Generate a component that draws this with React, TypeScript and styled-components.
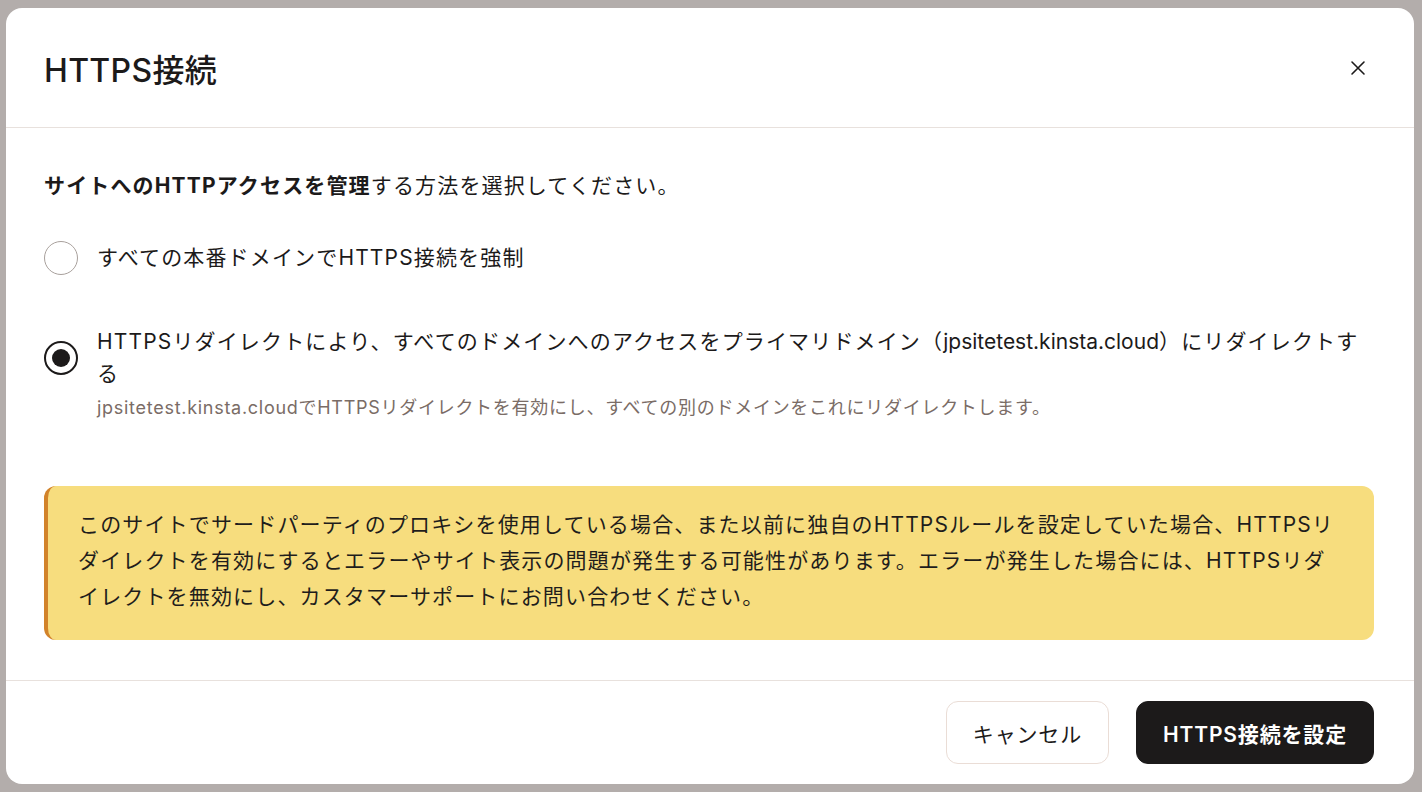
import React, { FC, useState } from 'react'
import styled, { createGlobalStyle } from 'styled-components'

const GlobalStyle = createGlobalStyle`
  html, body {
    margin: 0;
    padding: 0;
    height: 100%;
  }
  body {
    background: #b3adab;
    font-family: Inter, "Noto Sans CJK JP", sans-serif;
    color: #1c1a1a;
  }
  #root {
    height: 100%;
  }
`

const Backdrop = styled.div`
  height: 100vh;
  box-sizing: border-box;
  padding: 8px 8px 8px 6px;
  display: flex;
`

const Modal = styled.div`
  flex: 1;
  background: #fff;
  border-radius: 16px;
  display: flex;
  flex-direction: column;
  overflow: hidden;
`

const Header = styled.header`
  height: 121px;
  box-sizing: border-box;
  padding: 0 40px 0 38px;
  display: flex;
  align-items: center;
  justify-content: space-between;
  border-bottom: 1px solid #e8e1dd;
`

const Title = styled.h1`
  margin: 0;
  font-size: 32px;
  font-weight: 500;
  letter-spacing: 0.01em;
`

const CloseButton = styled.button`
  width: 32px;
  height: 32px;
  border: 0;
  background: none;
  padding: 0;
  display: flex;
  align-items: center;
  justify-content: center;
  color: #1c1a1a;
  cursor: pointer;
`

const Body = styled.div`
  flex: 1;
  padding: 40px 40px 40px 38px;
  display: flex;
  flex-direction: column;
`

const Lead = styled.p`
  margin: 0;
  font-size: 21px;
  line-height: 36px;
  letter-spacing: 0.055em;

  strong {
    font-weight: 700;
  }
`

const Options = styled.div`
  margin-top: 37px;
  display: flex;
  flex-direction: column;
  gap: 51px;
`

const Option = styled.label`
  display: flex;
  flex-direction: column;
  cursor: pointer;
`

const OptionRow = styled.div`
  display: flex;
  align-items: center;
  gap: 19px;
`

const Radio = styled.span<{ $checked: boolean }>`
  flex: none;
  width: 34px;
  height: 34px;
  box-sizing: border-box;
  border-radius: 50%;
  border: ${(p) => (p.$checked ? '2px solid #1c1a1a' : '1.5px solid #a8a09c')};
  display: flex;
  align-items: center;
  justify-content: center;

  &::after {
    content: '';
    display: ${(p) => (p.$checked ? 'block' : 'none')};
    width: 18px;
    height: 18px;
    border-radius: 50%;
    background: #1c1a1a;
  }
`

const OptionLabel = styled.span`
  font-size: 21px;
  line-height: 32px;
  letter-spacing: 0.055em;
`

const Domain = styled.span`
  letter-spacing: 0;
`

const OptionHint = styled.span`
  margin: 6px 0 0 53px;
  font-size: 18px;
  line-height: 24px;
  letter-spacing: 0.04em;
  color: #7a6c66;
`

const Warning = styled.div`
  margin-top: 66px;
  background: #f7dd7e;
  border-left: 4px solid #d2832a;
  border-radius: 12px;
  padding: 21px 28px 25px 30px;
  font-size: 21px;
  line-height: 36px;
  letter-spacing: 0.055em;
  color: #1f1d1c;
`

const Footer = styled.footer`
  border-top: 1px solid #e8e1dd;
  padding: 20px 40px 20px 38px;
  display: flex;
  justify-content: flex-end;
  gap: 27px;
`

const Button = styled.button<{ $primary?: boolean }>`
  height: 63px;
  padding: 0 26px;
  border-radius: 12px;
  font-family: inherit;
  font-size: 21px;
  letter-spacing: 0.04em;
  cursor: pointer;
  border: 1px solid ${(p) => (p.$primary ? '#1c1a1a' : '#eaddd6')};
  background: ${(p) => (p.$primary ? '#1c1a1a' : '#fff')};
  color: ${(p) => (p.$primary ? '#fff' : '#1c1a1a')};
  font-weight: ${(p) => (p.$primary ? 600 : 400)};
`

const CloseIcon = () => (
  <svg width="16" height="16" viewBox="0 0 16 16" fill="none">
    <path d="M2 2L14 14M14 2L2 14" stroke="currentColor" strokeWidth="1.6" strokeLinecap="round" />
  </svg>
)

type Mode = 'force' | 'redirect'

const App: FC = () => {
  const [mode, setMode] = useState<Mode>('redirect')

  return (
    <>
      <GlobalStyle />
      <Backdrop>
        <Modal role="dialog">
          <Header>
            <Title>HTTPS接続</Title>
            <CloseButton aria-label="閉じる">
              <CloseIcon />
            </CloseButton>
          </Header>
          <Body>
            <Lead>
              <strong>サイトへのHTTPアクセスを管理</strong>する方法を選択してください。
            </Lead>
            <Options>
              <Option onClick={() => setMode('force')}>
                <OptionRow>
                  <Radio $checked={mode === 'force'} />
                  <OptionLabel>すべての本番ドメインでHTTPS接続を強制</OptionLabel>
                </OptionRow>
              </Option>
              <Option onClick={() => setMode('redirect')}>
                <OptionRow>
                  <Radio $checked={mode === 'redirect'} />
                  <OptionLabel>
                    HTTPSリダイレクトにより、すべてのドメインへのアクセスをプライマリドメイン（
                    <Domain>jpsitetest.kinsta.cloud</Domain>）にリダイレクトする
                  </OptionLabel>
                </OptionRow>
                <OptionHint>
                  jpsitetest.kinsta.cloudでHTTPSリダイレクトを有効にし、すべての別のドメインをこれにリダイレクトします。
                </OptionHint>
              </Option>
            </Options>
            <Warning>
              このサイトでサードパーティのプロキシを使用している場合、また以前に独自のHTTPSルールを設定していた場合、HTTPSリダイレクトを有効にするとエラーやサイト表示の問題が発生する可能性があります。エラーが発生した場合には、HTTPSリダイレクトを無効にし、カスタマーサポートにお問い合わせください。
            </Warning>
          </Body>
          <Footer>
            <Button>キャンセル</Button>
            <Button $primary>HTTPS接続を設定</Button>
          </Footer>
        </Modal>
      </Backdrop>
    </>
  )
}

export default App
